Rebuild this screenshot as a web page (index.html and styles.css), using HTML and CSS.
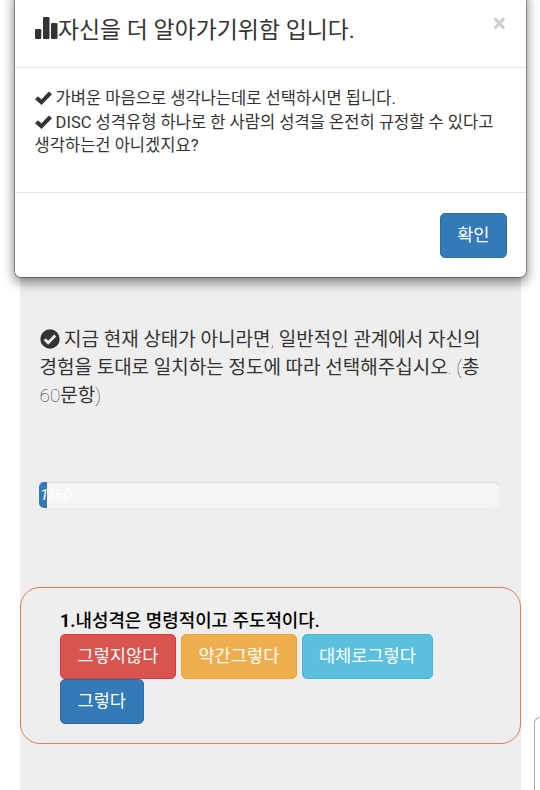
FILE: index.html
```
<!DOCTYPE html>
<html lang="ko">
<head>
<meta charset="utf-8">
<title>DISC 성격유형</title>
<link rel="stylesheet" href="styles.css">
</head>
<body>
<div class="jumbotron">
  <p class="guide"><svg class="icon-ok-circle" viewBox="0 0 20 20"><circle cx="10" cy="10" r="9.7" fill="#333"/><path d="M4.7 10.2l3.5 3.5 7-7.2" fill="none" stroke="#eee" stroke-width="3"/></svg><span class="thin"> </span>지금 현재 상태가 아니라면<span class="thin">,</span> 일반적인 관계에서 자신의<br>경험을 토대로 일치하는 정도에 따라 선택해주십시오<span class="thin">. (</span>총<br><span class="thin">60</span>문항<span class="thin">)</span></p>
  <div class="progress">
    <div class="progress-bar" style="width: 1.67%"><em>1/60</em></div>
  </div>
  <div class="question">
    <h4><b>1.</b>내성격은 명령적이고 주도적이다.</h4>
    <div class="answers">
      <button class="btn btn-danger">그렇지않다</button>
      <button class="btn btn-warning">약간그렇다</button>
      <button class="btn btn-info">대체로그렇다</button>
      <button class="btn btn-primary">그렇다</button>
    </div>
  </div>
</div>
<div class="side-box"></div>

<!-- 안내 모달 -->
<div class="modal-content">
  <div class="modal-header">
    <h4 class="modal-title"><svg class="icon-stats" viewBox="0 0 23 22"><rect x="0" y="12" width="6.3" height="10" rx="1.2"/><rect x="8" y="0" width="6.5" height="22" rx="1.2"/><rect x="16" y="6" width="6.5" height="16" rx="1.2"/></svg>자신을 더 알아가기위함 입니다.</h4>
    <button class="close">×</button>
  </div>
  <div class="modal-body">
    <svg class="icon-ok" viewBox="0 0 17 14"><path d="M0 8.2L3 5.2l3.3 3.2L14 .5 17 3.3 6.5 14z"/></svg> 가벼운 마음으로 생각나는데로 선택하시면 됩니다.<br>
    <svg class="icon-ok" viewBox="0 0 17 14"><path d="M0 8.2L3 5.2l3.3 3.2L14 .5 17 3.3 6.5 14z"/></svg> DISC 성격유형 하나로 한 사람의 성격을 온전히 규정할 수 있다고<br>
    생각하는건 아니겠지요?
  </div>
  <div class="modal-footer">
    <button class="btn btn-primary">확인</button>
  </div>
</div>
</body>
</html>
```
FILE: styles.css
```
* {
  box-sizing: border-box;
}
body {
  margin: 0;
  height: 790px;
  overflow: hidden;
  position: relative;
  background-color: #fff;
  color: #333;
  font-family: Roboto, "Noto Sans CJK KR", sans-serif;
  font-size: 16.55px;
  line-height: 24px;
}
h4 {
  margin: 0;
  font-weight: 500;
}
/* 본문 */
.jumbotron {
  width: 501px;
  height: 790px;
  margin-left: 20px;
  padding-top: 326px;
  background-color: #eee;
}
.guide {
  margin: 0 0 72px 19.5px;
  font-size: 19px;
  line-height: 28px;
  white-space: nowrap;
}
.thin {
  font-weight: 100;
}
.icon-ok-circle {
  width: 20px;
  height: 20px;
  vertical-align: -3px;
}
/* 진행 막대 */
.progress {
  width: 461px;
  height: 26px;
  margin-left: 19px;
  overflow: hidden;
  border-radius: 5px;
  background-color: #f5f5f5;
  box-shadow: inset 0 1px 2px rgba(0, 0, 0, 0.1);
}
.progress-bar {
  height: 100%;
  padding-left: 1px;
  background-color: #337ab7;
  color: #fff;
  font-size: 15.5px;
  line-height: 27px;
  white-space: nowrap;
}
/* 문항 */
.question {
  height: 157px;
  margin-top: 79px;
  padding: 20px 39px;
  border: 1.5px solid #e47c4d;
  border-radius: 20px;
}
.question h4 {
  color: #000;
  font-size: 17.9px;
  line-height: 26px;
  white-space: nowrap;
}
.answers {
  display: flex;
  flex-wrap: wrap;
  column-gap: 5px;
}
.btn {
  height: 45px;
  padding: 0 16.5px 2px;
  border: 1px solid transparent;
  border-radius: 5px;
  color: #fff;
  font-family: inherit;
  font-size: 17.6px;
  line-height: 40px;
  white-space: nowrap;
}
.btn-danger {
  background-color: #d9534f;
  border-color: #d43f3a;
}
.btn-warning {
  background-color: #f0ad4e;
  border-color: #eea236;
}
.btn-info {
  padding: 0 16px 2px;
  background-color: #5bc0de;
  border-color: #46b8da;
}
.btn-primary {
  background-color: #337ab7;
  border-color: #2e6da4;
}
/* 오른쪽 가장자리 */
.side-box {
  position: absolute;
  left: 534px;
  top: 717px;
  width: 6px;
  height: 73px;
  border: 1px solid #aaa;
  border-right: 0;
  border-bottom: 0;
  border-radius: 6px 0 0 0;
}
/* 모달 */
.modal-content {
  position: absolute;
  left: 14px;
  top: -10px;
  width: 513px;
  height: 288px;
  border: 1px solid rgba(0, 0, 0, 0.3);
  border-radius: 7px;
  background-color: #fff;
  background-clip: padding-box;
  box-shadow: 0 4px 12px rgba(0, 0, 0, 0.5);
}
.modal-header {
  display: flex;
  justify-content: space-between;
  height: 77px;
  padding: 21px 20px 0 20px;
  border-bottom: 1px solid #e5e5e5;
}
.modal-title {
  margin-top: 3px;
  font-size: 22.9px;
  font-weight: 400;
  line-height: 32px;
  white-space: nowrap;
}
.icon-stats {
  width: 23px;
  height: 22px;
  vertical-align: -1px;
  fill: #333;
}
.close {
  height: 24px;
  padding: 0;
  border: 0;
  background: none;
  color: #ccc;
  font-family: Roboto, sans-serif;
  font-size: 25px;
  font-weight: 700;
  line-height: 20px;
}
.modal-body {
  height: 124px;
  padding: 19px 19.5px 0;
  line-height: 23.6px;
  white-space: nowrap;
}
.icon-ok {
  width: 17px;
  height: 14px;
  vertical-align: -1px;
  fill: #333;
}
.modal-footer {
  display: flex;
  justify-content: flex-end;
  padding: 20px 19px;
  border-top: 1px solid #e5e5e5;
}
```
